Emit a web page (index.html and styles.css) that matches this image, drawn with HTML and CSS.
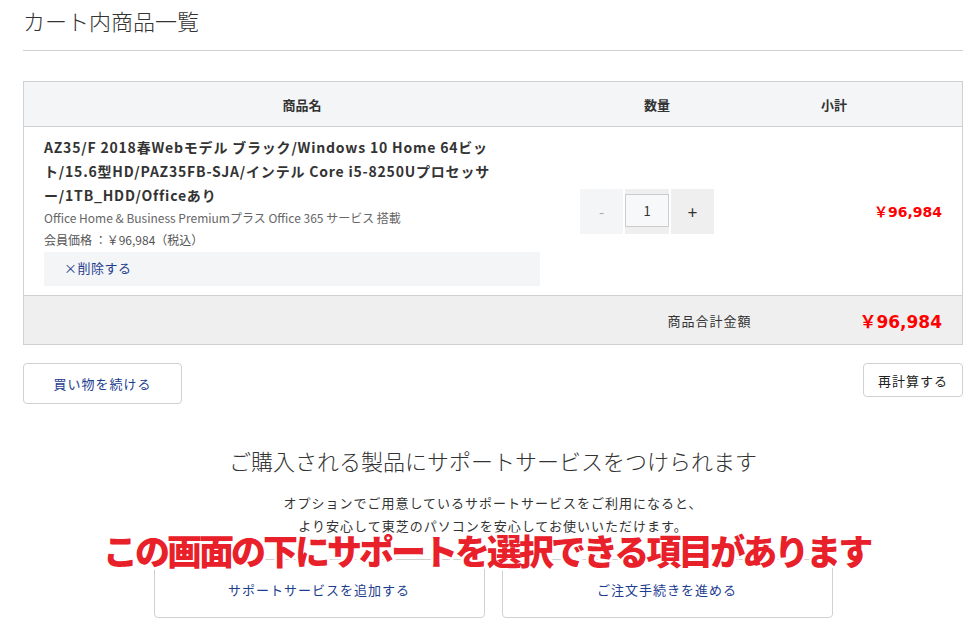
FILE: index.html
```html
<!DOCTYPE html>
<html lang="ja">
<head>
<meta charset="utf-8">
<link rel="stylesheet" href="styles.css">
</head>
<body>
<div class="page">
  <h1 class="title">カート内商品一覧</h1>
  <div class="cart">
    <div class="row head">
      <div class="c-name">商品名</div>
      <div class="c-qty">数量</div>
      <div class="c-sub">小計</div>
    </div>
    <div class="row item">
      <div class="c-name info">
        <div class="pname">AZ35/F 2018春Webモデル ブラック/Windows 10 Home 64ビッ<br>ト/15.6型HD/PAZ35FB-SJA/インテル Core i5-8250Uプロセッサ<br>ー/1TB_HDD/Officeあり</div>
        <div class="pnote">Office Home &amp; Business Premiumプラス Office 365 サービス 搭載</div>
        <div class="pprice">会員価格 ：￥96,984（税込）</div>
        <div class="del">×削除する</div>
      </div>
      <div class="c-qty qty">
        <div class="stepper">
          <span class="btn minus">-</span>
          <span class="num"><span class="box">1</span></span>
          <span class="btn plus">+</span>
        </div>
      </div>
      <div class="c-sub price">￥96,984</div>
    </div>
    <div class="row total">
      <div class="tlabel">商品合計金額</div>
      <div class="tprice">￥96,984</div>
    </div>
  </div>
  <div class="actions">
    <a class="obtn cont">買い物を続ける</a>
    <a class="obtn recalc">再計算する</a>
  </div>
  <section class="support">
    <h2>ご購入される製品にサポートサービスをつけられます</h2>
    <p>オプションでご用意しているサポートサービスをご利用になると、<br>より安心して東芝のパソコンを安心してお使いいただけます。</p>
    <div class="choices">
      <a class="cbtn">サポートサービスを追加する</a>
      <a class="cbtn">ご注文手続きを進める</a>
    </div>
    <div class="note">この画面の下にサポートを選択できる項目があります</div>
  </section>
</div>
</body>
</html>
```

FILE: styles.css
```css
* { box-sizing: border-box; }
html, body { margin: 0; padding: 0; background: #fff; }
body {
  font-family: "Noto Sans CJK JP", "Noto Sans", sans-serif;
  color: #333;
  font-size: 13px;
}
.page {
  width: 940px;
  margin-left: 23px;
  position: relative;
}
.title {
  margin: 0;
  font-size: 22px;
  font-weight: 300;
  line-height: 40px;
  height: 51px;
  border-bottom: 1px solid #d0d0d0;
  color: #333;
}
.cart {
  margin-top: 30px;
  border: 1px solid #d0d0d0;
}
.row { display: flex; }
.c-name { width: 556px; }
.c-qty { width: 146px; }
.c-sub { flex: 1; }
.head {
  background: #f4f5f7;
  height: 45px;
  border-bottom: 1px solid #d0d0d0;
  align-items: center;
  font-weight: 700;
  font-size: 13px;
}
.head > div { text-align: center; }
.head .c-qty { padding-left: 8px; }
.head .c-sub { padding-right: 20px; }
.item {
  height: 169px;
  border-bottom: 1px solid #d0d0d0;
}
.info { padding: 8px 0 0 20px; }
.pname {
  font-weight: 700;
  font-size: 14px;
  line-height: 24px;
  color: #333;
  width: 500px;
  letter-spacing: 0.8px;
  white-space: nowrap;
}
.pnote {
  font-size: 12px;
  color: #666;
  line-height: 22px;
}
.pprice {
  font-size: 12px;
  color: #555;
  line-height: 22px;
}
.del {
  width: 496px;
  height: 34px;
  margin-top: 1px;
  background: #f4f5f7;
  color: #1d3d8f;
  font-size: 13px;
  line-height: 32px;
  padding-left: 20px;
  letter-spacing: 0.5px;
}
.qty {
  display: flex;
  align-items: center;
}
.stepper {
  display: flex;
  gap: 2px;
  height: 45px;
}
.btn {
  width: 43px;
  height: 45px;
  display: flex;
  align-items: center;
  justify-content: center;
  font-size: 15px;
}
.minus { background: #f4f5f7; color: #aaa; }
.plus { background: #efefef; color: #333; font-size: 17px; }
.num {
  width: 44px;
  background: #efefef;
  display: flex;
  align-items: flex-start;
  justify-content: center;
  padding-top: 5px;
}
.box {
  width: 44px;
  height: 33px;
  border: 1px solid #ccc;
  background: #f7f8fa;
  display: flex;
  align-items: center;
  justify-content: center;
  font-size: 13px;
}
.price {
  display: flex;
  align-items: center;
  justify-content: flex-end;
  padding-right: 20px;
  color: #f00;
  font-size: 14px;
  font-weight: 700;
  font-family: "DejaVu Sans", "Noto Sans CJK JP", sans-serif;
}
.total {
  background: #efefef;
  height: 48px;
  align-items: center;
  justify-content: flex-end;
  padding-right: 20px;
}
.tlabel { font-size: 13px; color: #333; margin-right: 108px; letter-spacing: 1px; }
.tprice {
  color: #f00;
  font-size: 17px;
  font-weight: 700;
  font-family: "DejaVu Sans", "Noto Sans CJK JP", sans-serif;
}
.actions {
  display: flex;
  justify-content: space-between;
  align-items: flex-start;
  margin-top: 18px;
}
.obtn {
  display: flex;
  align-items: center;
  justify-content: center;
  border: 1px solid #d0d0d0;
  border-radius: 4px;
  font-size: 13px;
  letter-spacing: 1px;
}
.cont { width: 159px; height: 41px; color: #1d3d8f; }
.recalc { width: 100px; height: 34px; color: #222; }
.support {
  text-align: center;
  margin-top: 38px;
  position: relative;
}
.support h2 {
  margin: 0;
  font-size: 22px;
  font-weight: 300;
  line-height: 36px;
  color: #333;
}
.support p {
  margin: 13px 0 0;
  font-size: 13px;
  line-height: 23px;
  color: #333;
  letter-spacing: 1px;
}
.choices {
  display: flex;
  justify-content: center;
  gap: 17px;
  margin-top: 22px;
}
.cbtn {
  width: 331px;
  height: 59px;
  border: 1px solid #d0d0d0;
  border-radius: 4px;
  display: flex;
  align-items: center;
  justify-content: center;
  color: #1d3d8f;
  font-size: 13px;
  letter-spacing: 1px;
  padding-top: 2px;
}
.note {
  position: absolute;
  left: 80px;
  top: 87px;
  font-size: 35px;
  font-weight: 900;
  color: #e8202a;
  letter-spacing: -3px;
  white-space: nowrap;
  line-height: 42px;
  -webkit-text-stroke: 5px #fff;
  paint-order: stroke fill;
  text-align: left;
}
```
